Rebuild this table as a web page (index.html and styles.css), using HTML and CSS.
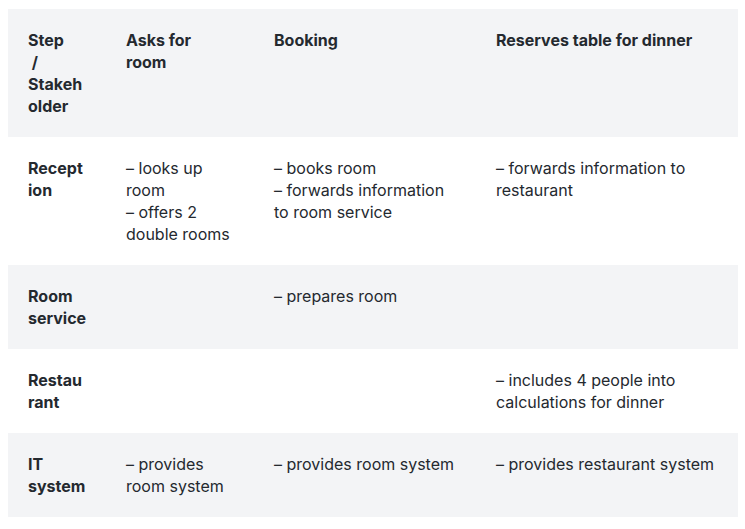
FILE: index.html
```html
<!DOCTYPE html>
<html lang="en">
<head>
<meta charset="utf-8">
<link rel="stylesheet" href="styles.css">
</head>
<body>
<table class="matrix">
  <colgroup>
    <col class="c1"><col class="c2"><col class="c3"><col class="c4">
  </colgroup>
  <thead>
    <tr class="shade">
      <th>Step<br>&nbsp;/<br>Stakeh<br>older</th>
      <th>Asks for<br>room</th>
      <th>Booking</th>
      <th>Reserves table for dinner</th>
    </tr>
  </thead>
  <tbody>
    <tr>
      <th>Recept<br>ion</th>
      <td>– looks up<br>room<br>– offers 2<br>double rooms</td>
      <td>– books room<br>– forwards information<br>to room service</td>
      <td>– forwards information to<br>restaurant</td>
    </tr>
    <tr class="shade">
      <th>Room<br>service</th>
      <td></td>
      <td>– prepares room</td>
      <td></td>
    </tr>
    <tr>
      <th>Restau<br>rant</th>
      <td></td>
      <td></td>
      <td>– includes 4 people into<br>calculations for dinner</td>
    </tr>
    <tr class="shade">
      <th>IT<br>system</th>
      <td>– provides<br>room system</td>
      <td>– provides room system</td>
      <td>– provides restaurant system</td>
    </tr>
  </tbody>
</table>
</body>
</html>
```
FILE: styles.css
```css
html, body {
  background: #ffffff;
}
body {
  margin: 9px 7px 8px 8px;
  font-family: Inter, "Noto Sans", sans-serif;
  font-size: 16px;
  line-height: 22px;
  color: #24292f;
}
.matrix {
  width: 730px;
  border-collapse: collapse;
  table-layout: fixed;
}
.c1 { width: 98px; }
.c2 { width: 148px; }
.c3 { width: 222px; }
.c4 { width: 262px; }
.matrix th,
.matrix td {
  padding: 20px 0 20px 20px;
  vertical-align: top;
  text-align: left;
}
.matrix th {
  font-weight: 700;
}
.matrix td {
  font-weight: 400;
}
.shade {
  background: #f3f4f6;
}
```
